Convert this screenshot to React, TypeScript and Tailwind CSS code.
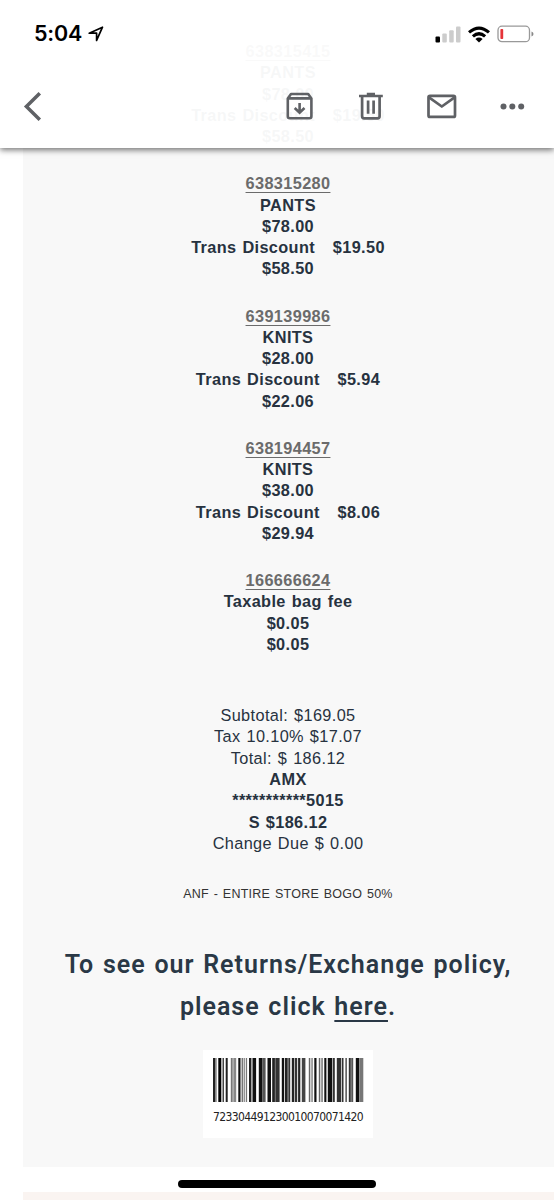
import React from "react";

type Item = { sku: string; name: string; price: string; discount?: string; net: string };

const items: Item[] = [
  { sku: "638315415", name: "PANTS", price: "$78.00", discount: "$19.50", net: "$58.50" },
  { sku: "638315280", name: "PANTS", price: "$78.00", discount: "$19.50", net: "$58.50" },
  { sku: "639139986", name: "KNITS", price: "$28.00", discount: "$5.94", net: "$22.06" },
  { sku: "638194457", name: "KNITS", price: "$38.00", discount: "$8.06", net: "$29.94" },
  { sku: "166666624", name: "Taxable bag fee", price: "$0.05", net: "$0.05" },
];

// [offset, width, shade] of every bar
const bars: [number, number, string][] = [
  [0, 2, "#222"], [2.3, 1.2, "#555"], [5.3, 3, "#000"], [9.5, 1.5, "#444"], [12.7, 2, "#222"],
  [17.8, 1.9, "#777"], [20.3, 2.9, "#888"], [25.3, 2.2, "#111"], [28.6, 1.3, "#666"], [30.6, 1.3, "#888"], [32.8, 1.3, "#777"],
  [36, 2.4, "#222"], [39.5, 3.6, "#111"], [45.8, 3.4, "#111"], [49.2, 3.4, "#555"], [54.5, 3.5, "#111"],
  [59.2, 2.7, "#222"], [62.3, 4.3, "#333"], [68.8, 2.4, "#111"], [72, 2.7, "#222"], [75.3, 1.9, "#333"],
  [78.8, 2.4, "#222"], [81.8, 2.4, "#333"], [85.1, 2.2, "#222"], [88.8, 3.6, "#444"], [95.8, 1.5, "#666"],
  [98.3, 1.5, "#888"], [101.3, 2.2, "#111"], [105.8, 1.5, "#666"], [108.3, 1.5, "#777"], [111.3, 2.1, "#111"],
  [114.8, 4.4, "#111"], [119.8, 2, "#333"], [123.8, 4.4, "#333"], [128.9, 1.6, "#333"], [132.3, 1.7, "#666"],
  [135.8, 2, "#333"], [138.2, 2, "#555"], [142.8, 3.4, "#111"], [146.3, 4, "#777"],
];

function Line({ children, className = "" }: { children: React.ReactNode; className?: string }) {
  return <div className={`whitespace-pre ${className}`}>{children}</div>;
}

function StatusBar() {
  return (
    <div className="flex h-[68px] items-center justify-between pl-[34px] pr-[20px]">
      <div className="flex items-center gap-[6px] font-['Inter','Liberation_Sans',sans-serif] text-[21.5px] font-semibold leading-none tracking-[-0.2px] text-black">
        <span>5:04</span>
        <svg width="16" height="16" viewBox="0 0 16 16" fill="none" stroke="#000" strokeWidth="1.7" strokeLinejoin="round">
          <path d="M14.5 1.2 1.2 7.2H8.6V14.4Z" />
        </svg>
      </div>
      <div className="flex items-center">
        <svg width="27" height="17" viewBox="0 0 27 17">
          <rect x="0.5" y="10.5" width="4.5" height="6" rx="1" fill="#000" />
          <rect x="7.3" y="7.5" width="4.5" height="9" rx="1" fill="#ccc" />
          <rect x="14.2" y="4.3" width="4.5" height="12.2" rx="1" fill="#ccc" />
          <rect x="21" y="0.6" width="4.5" height="15.9" rx="1" fill="#ccc" />
        </svg>
        <svg className="ml-[6px]" width="22" height="17" viewBox="0 0 22 17" fill="none" stroke="#000" strokeWidth="3.2">
          <path d="M1 6.4Q11-2.3 21 6.4" />
          <path d="M4.9 10.4Q11 5.1 17.1 10.4" />
          <path d="M7.4 12.9Q11 10.2 14.6 12.9L11 16.6Z" fill="#000" stroke="none" />
        </svg>
        <svg className="ml-[7px]" width="37" height="18" viewBox="0 0 37 18" fill="none">
          <rect x="1" y="1.2" width="31.5" height="15.5" rx="4" stroke="#999" strokeWidth="1.3" />
          <rect x="3.4" y="4" width="2.8" height="10" rx="0.8" fill="#e53338" />
          <path d="M34.5 6.5Q36.5 7.2 36.5 9T34.5 11.5Z" fill="#888" />
        </svg>
      </div>
    </div>
  );
}

function Toolbar() {
  return (
    <div className="flex items-center pl-[23px] pt-[22px] text-[#5f6165]">
      <svg width="20" height="32" viewBox="0 0 20 32" fill="none" stroke="currentColor" strokeWidth="3.5">
        <path d="M16.8 3.2 3.4 16.5 16.8 29.8" />
      </svg>
      <svg className="ml-[242px]" width="30" height="30" viewBox="0 0 30 30" fill="none" stroke="currentColor" strokeWidth="2.6">
        <path d="M2.8 7.4 6 3H23.2L26.4 7.4V25.3Q26.4 27.3 24.4 27.3H4.8Q2.8 27.3 2.8 25.3Z" strokeLinejoin="round" />
        <path d="M2.8 7.4H26.4M14.6 12V21M9.7 17 14.6 21.8 19.5 17" />
      </svg>
      <svg className="ml-[42px]" width="28" height="30" viewBox="0 0 28 30" fill="none" stroke="currentColor" strokeWidth="2.7">
        <path d="M2 5H25.8M9.8 3.2H18" />
        <path d="M5.1 5V25.3Q5.1 27.4 7.1 27.4H20.5Q22.6 27.4 22.6 25.3V5" />
        <path d="M11.1 9.5V22.8M16.6 9.5V22.8" />
      </svg>
      <svg className="ml-[41px]" width="32" height="30" viewBox="0 0 32 30" fill="none" stroke="currentColor" strokeWidth="2.7" strokeLinejoin="round">
        <rect x="2.5" y="4.9" width="26.5" height="21" rx="1.5" />
        <path d="M3 6.4 15.8 15.5 28.6 6.4" />
      </svg>
      <svg className="ml-[41px]" width="26" height="30" viewBox="0 0 26 30" fill="currentColor">
        <circle cx="4.5" cy="15.4" r="3" />
        <circle cx="13.3" cy="15.4" r="3" />
        <circle cx="22.2" cy="15.4" r="3" />
      </svg>
    </div>
  );
}

export default function App() {
  return (
    <div className="relative h-[1200px] w-[554px] overflow-hidden bg-white pl-[23px]">
      <main className="flex h-[1167px] flex-col items-center bg-[#f8f8f8] pr-px pt-[41px] font-['Liberation_Sans',Arial,sans-serif] text-[16.3px] leading-[21.3px] tracking-[0.38px] text-[#27323f] [word-spacing:1px]">
        {items.map((item) => (
          <section key={item.sku} className="mb-[25.8px] text-center font-bold">
            <Line className="text-[#6b6b6b] underline decoration-1 underline-offset-[3px]">{item.sku}</Line>
            <Line>{item.name}</Line>
            <Line>{item.price}</Line>
            {item.discount && <Line>{"Trans Discount   " + item.discount}</Line>}
            <Line>{item.net}</Line>
          </section>
        ))}
        <section className="mt-[24px] text-center">
          <Line>Subtotal: $169.05</Line>
          <Line>Tax 10.10% $17.07</Line>
          <Line>Total: $ 186.12</Line>
          <Line className="font-bold">AMX</Line>
          <Line className="font-bold">***********5015</Line>
          <Line className="font-bold">S $186.12</Line>
          <Line>Change Due $ 0.00</Line>
        </section>
        <p className="mt-[30px] text-[12.5px] tracking-[0.25px] text-[#333]">ANF - ENTIRE STORE BOGO 50%</p>
        <h2 className="mt-[39px] whitespace-nowrap text-center font-['Roboto',sans-serif] text-[25px] font-semibold leading-[42px] tracking-[1px] text-[#2a3846] [word-spacing:1.5px]">
          To see our Returns/Exchange policy,
          <br />
          please click <span className="underline decoration-2 underline-offset-[5px]">here</span>.
        </h2>
        <div className="mt-[22px] flex h-[88px] w-[170px] flex-col items-center bg-white pt-[8px]">
          <svg width="151" height="44" viewBox="0 0 151 44">
            {bars.map(([x, w, fill]) => (
              <rect key={x} x={x} y="0" width={w} height="44" fill={fill} />
            ))}
          </svg>
          <div className="mt-[5px] font-['DejaVu_Sans_Condensed','DejaVu_Sans',sans-serif] text-[12px] font-stretch-condensed tracking-[-0.62px] text-[#222]">
            723304491230010070071420
          </div>
        </div>
      </main>
      <div className="mt-[25px] h-[8px] bg-[#faf4f1]" />
      <header className="absolute left-0 top-0 h-[148px] w-full bg-white/96 shadow-[0_2px_6px_rgba(0,0,0,0.55)]">
        <StatusBar />
        <Toolbar />
      </header>
      <div className="absolute left-[178px] top-[1180px] h-[8px] w-[198px] rounded-full bg-black" />
    </div>
  );
}
